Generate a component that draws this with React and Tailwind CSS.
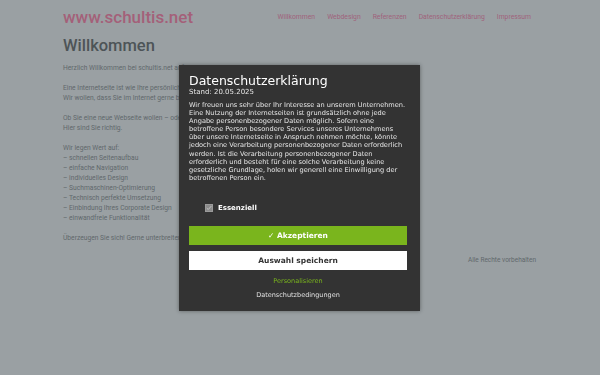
import React from 'react';

const features = [
  'schnellen Seitenaufbau',
  'einfache Navigation',
  'individuelles Design',
  'Suchmaschinen-Optimierung',
  'Technisch perfekte Umsetzung',
  'Einbindung Ihres Corporate Design',
  'einwandfreie Funktionalität',
];

const nav = ['Willkommen', 'Webdesign', 'Referenzen', 'Datenschutzerklärung', 'Impressum'];

function CookieModal() {
  return (
    <div className="fixed inset-0 flex items-start justify-center pt-[65px] pr-[1px]">
      <div
        className="w-[241px] h-[246px] bg-[#333333] text-white pl-[10px] pr-[13px] pt-[8px] shadow-[0_0_4px_rgba(0,0,0,0.4)]"
        style={{ fontFamily: '"DejaVu Sans", Verdana, sans-serif' }}
      >
        <h2 className="text-[12.5px] leading-[15px]">Datenschutzerklärung</h2>
        <p className="text-[7px] leading-[9px] text-[#e6e6e6]">Stand: 20.05.2025</p>
        <p className="mt-[4px] text-[6.6px] leading-[8.1px] text-[#e6e6e6]">
          Wir freuen uns sehr über Ihr Interesse an unserem Unternehmen. Eine Nutzung der Internetseiten ist grundsätzlich ohne jede Angabe personenbezogener Daten möglich. Sofern eine betroffene Person besondere Services unseres Unternehmens über unsere Internetseite in Anspruch nehmen möchte, könnte jedoch eine Verarbeitung personenbezogener Daten erforderlich werden. Ist die Verarbeitung personenbezogener Daten erforderlich und besteht für eine solche Verarbeitung keine gesetzliche Grundlage, holen wir generell eine Einwilligung der betroffenen Person ein.
        </p>
        <div className="mt-[21px] flex items-center gap-[5px] pl-[16px]">
          <span className="w-[8px] h-[8px] bg-[#8a8a8a] border border-[#9a9a9a] flex items-center justify-center">
            <svg viewBox="0 0 8 8" className="w-[6px] h-[6px]">
              <path d="M1 4.2 L3 6 L7 1.5" fill="none" stroke="#c8c8c8" strokeWidth="1.2" />
            </svg>
          </span>
          <span className="text-[7px] font-bold">Essenziell</span>
        </div>
        <button className="mt-[13px] w-full h-[19px] bg-[#7ab51d] text-white text-[7.5px] font-bold flex items-center justify-center">
          ✓ Akzeptieren
        </button>
        <button className="mt-[6px] w-full h-[19px] bg-white text-[#333333] text-[7.5px] font-bold flex items-center justify-center">
          Auswahl speichern
        </button>
        <div className="mt-[7px] text-center text-[6.5px] leading-[9px] text-[#7ab51d]">Personalisieren</div>
        <div className="mt-[5px] text-center text-[6.5px] leading-[9px] text-[#e0e0e0]">Datenschutzbedingungen</div>
      </div>
    </div>
  );
}

export default function App() {
  return (
    <div className="relative w-[600px] h-[375px] overflow-hidden bg-[#9aa0a3]" style={{ fontFamily: 'Roboto, "Open Sans", sans-serif' }}>
      <div className="pl-[63px] pr-[62px]">
        <header className="flex items-center justify-between h-[35px] pr-[7px]">
          <div className="text-[17px] font-medium text-[#a46079] leading-none">www.schultis.net</div>
          <nav className="flex gap-[12px] text-[6.8px] text-[#a0637c]">
            {nav.map((n) => (
              <span key={n}>{n}</span>
            ))}
          </nav>
        </header>
        <h1 className="text-[16.5px] font-medium text-[#4d5457] leading-[22px]">Willkommen</h1>
        <div className="mt-[6px] text-[6.7px] leading-[10px] text-[#61686c]">
          <p>Herzlich Willkommen bei schultis.net auf unserer Internetseite.</p>
          <p className="mt-[10px]">Eine Internetseite ist wie Ihre persönliche Visitenkarte im Internet.</p>
          <p>Wir wollen, dass Sie im Internet gerne besucht werden.</p>
          <p className="mt-[10px]">Ob Sie eine neue Webseite wollen – oder eine bestehende überarbeiten lassen möchten:</p>
          <p>Hier sind Sie richtig.</p>
          <p className="mt-[10px]">Wir legen Wert auf:</p>
          {features.map((f) => (
            <p key={f}>– {f}</p>
          ))}
          <p className="mt-[10px]">Überzeugen Sie sich! Gerne unterbreiten wir Ihnen ein Angebot.</p>
        </div>
        <div className="mt-[13px] pr-[2px] flex justify-end text-[6.5px] text-[#61686c]">Alle Rechte vorbehalten</div>
      </div>
      <CookieModal />
    </div>
  );
}
